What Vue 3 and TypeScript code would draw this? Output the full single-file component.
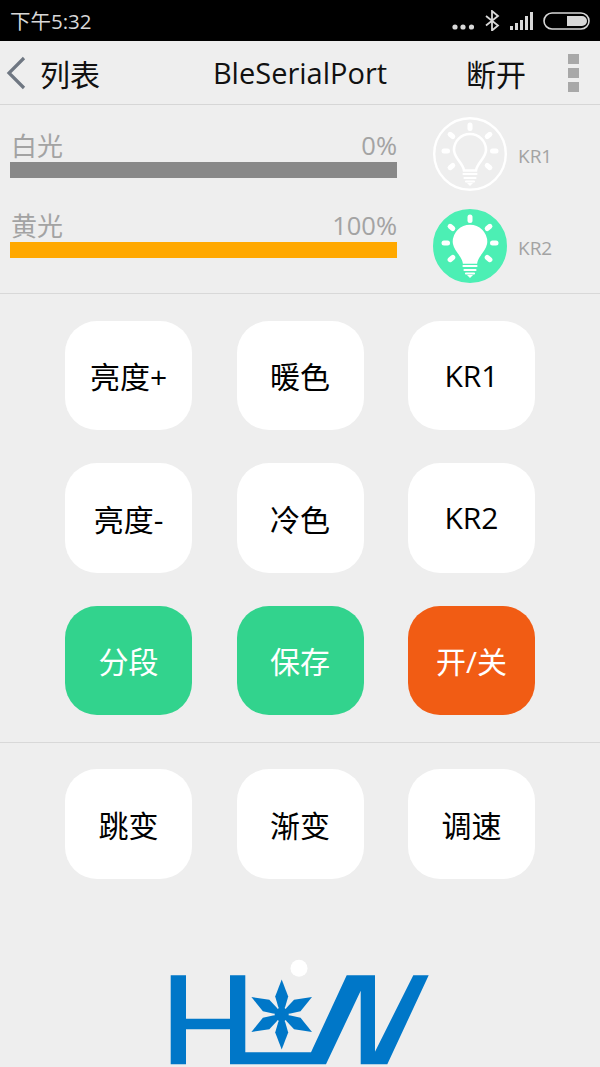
<template>
  <div class="screen">
    <div class="status-bar">
      <span class="time">下午5:32</span>
      <div class="status-icons">
        <svg class="dots" width="22" height="6" viewBox="0 0 22 6"><circle cx="3" cy="3" r="2.6" /><circle cx="11" cy="3" r="2.6" /><circle cx="19.5" cy="3" r="2.6" /></svg>
        <svg class="bt" width="16" height="21" viewBox="0 0 16 21"><path d="M2 6l12 9.5-6 5V1l6 5L2 15.5" /></svg>
        <svg class="signal" width="24" height="18" viewBox="0 0 24 18"><rect v-for="b in signalBars" :key="b.x" :x="b.x" :y="18 - b.h" width="3" :height="b.h" /></svg>
        <svg class="battery" width="47" height="18" viewBox="0 0 47 18"><rect class="shell" x="1" y="1" width="45" height="16" rx="8" /><path d="M24 4h15a5 5 0 0 1 0 10H24z" /></svg>
      </div>
    </div>

    <div class="nav-bar">
      <div class="nav-left">
        <svg class="back" width="20" height="34" viewBox="0 0 20 34"><path d="M18 2L3 17l15 15" /></svg>
        <span>列表</span>
      </div>
      <span class="title">BleSerialPort</span>
      <div class="nav-right">
        <span class="disconnect">断开</span>
        <div class="kebab"><i /><i /><i /></div>
      </div>
    </div>

    <div class="lights">
      <div class="bars">
        <div v-for="c in channels" :key="c.label" class="channel">
          <div class="channel-head">
            <span class="name">{{ c.label }}</span>
            <span class="pct">{{ c.value }}%</span>
          </div>
          <div class="bar" :class="c.tone" />
        </div>
      </div>
      <div class="lamps">
        <div v-for="l in lamps" :key="l.name" class="lamp">
          <svg width="74" height="74" viewBox="-37 -37 74 74" :class="{ on: l.on }">
            <circle class="disc" r="35.8" />
            <g class="rays" transform="translate(0 -3)">
              <path v-for="a in rayAngles" :key="a" d="M0 -22.5V-26" :transform="`rotate(${a})`" />
            </g>
            <path class="bulb" d="M-6 16.5C-7 9-16 4-16-4A16 16 0 1 1 16-4C16 4 7 9 6 16.5Z" />
            <path class="base" d="M-6.5 20H6.5M-5.5 24H5.5M-4 27.5H4" />
            <path class="tip" d="M-3 29H3L0 32Z" />
          </svg>
          <span class="lamp-name">{{ l.name }}</span>
        </div>
      </div>
    </div>

    <div class="keys first">
      <button v-for="k in mainKeys" :key="k.text" class="key" :class="k.tone">{{ k.text }}</button>
    </div>

    <div class="keys second">
      <button v-for="k in modeKeys" :key="k" class="key">{{ k }}</button>
    </div>

    <svg class="logo" width="260" height="108" viewBox="170 959 260 108">
      <circle class="logo-dot" cx="299" cy="968.3" r="8.5" />
      <path d="M170.7 975.3H186V1018.7H230V975.3H245.3V1052.3H311L346.7 975.3H375V1051.7L413.3 975.3H428.7L387.3 1064.3H360.7V990.7L326 1064.3H230V1029.3H186V1064.3H170.7Z" />
      <g transform="translate(281.7 1014.5)">
        <circle r="7" />
        <path v-for="a in petalAngles" :key="a" d="M0-35L6.5-18L3.6-8L0 0L-3.6-8L-6.5-18Z" :transform="`rotate(${a})`" />
      </g>
    </svg>
  </div>
</template>

<script setup lang="ts">
const signalBars = [
  { x: 0, h: 4 },
  { x: 5, h: 7 },
  { x: 10, h: 10 },
  { x: 15, h: 14 },
  { x: 20, h: 18 },
]

const channels = [
  { label: '白光', value: 0, tone: 'grey' },
  { label: '黄光', value: 100, tone: 'amber' },
]

const lamps = [
  { name: 'KR1', on: false },
  { name: 'KR2', on: true },
]

const rayAngles = [0, 50, 90, 130, 230, 270, 310]
const petalAngles = [0, 60, 120, 180, 240, 300]

const mainKeys = [
  { text: '亮度+', tone: '' },
  { text: '暖色', tone: '' },
  { text: 'KR1', tone: '' },
  { text: '亮度-', tone: '' },
  { text: '冷色', tone: '' },
  { text: 'KR2', tone: '' },
  { text: '分段', tone: 'green' },
  { text: '保存', tone: 'green' },
  { text: '开/关', tone: 'orange' },
]

const modeKeys = ['跳变', '渐变', '调速']
</script>

<style>
html,
body {
  margin: 0;
  background: #eeeeee;
}
</style>

<style scoped>
.screen {
  width: 600px;
  height: 1067px;
  overflow: hidden;
  display: flex;
  flex-direction: column;
  background: #eeeeee;
  font-family: "Open Sans", "Noto Sans CJK SC", sans-serif;
}

.status-bar {
  height: 41px;
  flex: none;
  display: flex;
  align-items: center;
  justify-content: space-between;
  padding: 0 10px;
  background: #000;
  color: #d8d8d8;
}
.time {
  font-size: 20.5px;
  margin-top: -1px;
}
.status-icons {
  display: flex;
  align-items: center;
  gap: 10px;
}
.status-icons svg {
  display: block;
  fill: #d8d8d8;
}
.dots {
  margin-top: 13px;
}
.status-icons .bt {
  fill: none;
  stroke: #d8d8d8;
  stroke-width: 1.8;
}
.status-icons .battery {
  margin-left: -1px;
}
.status-icons .battery .shell {
  fill: none;
  stroke: #d8d8d8;
  stroke-width: 1.6;
}

.nav-bar {
  height: 63px;
  flex: none;
  display: grid;
  grid-template-columns: 1fr auto 1fr;
  align-items: center;
  border-bottom: 1px solid #d6d6d6;
  color: #111;
  font-size: 30px;
}
.nav-left {
  display: flex;
  align-items: center;
  padding-left: 6px;
  gap: 14px;
}
.back {
  fill: none;
  stroke: #6f7782;
  stroke-width: 3.2;
}
.title {
  font-size: 29px;
}
.nav-right {
  display: flex;
  align-items: center;
  justify-content: flex-end;
  gap: 42px;
  padding-right: 21px;
}
.kebab {
  display: flex;
  flex-direction: column;
  gap: 4px;
}
.kebab i {
  display: block;
  width: 11px;
  height: 10px;
  background: #a8a8a8;
}

.lights {
  height: 188px;
  flex: none;
  display: flex;
  border-bottom: 1px solid #d8d8d8;
}
.bars {
  width: 387px;
  margin-left: 10px;
  padding-top: 24px;
  display: flex;
  flex-direction: column;
  gap: 31px;
}
.channel-head {
  height: 33px;
  display: flex;
  align-items: center;
  justify-content: space-between;
  padding-left: 1px;
  font-size: 26px;
  color: #a3a3a3;
}
.name {
  margin-top: -1px;
}
.pct {
  font-size: 25.5px;
  margin-top: -2px;
}
.bar {
  height: 16px;
}
.bar.grey {
  background: #888888;
}
.bar.amber {
  background: #ffa800;
}
.lamps {
  margin-left: 36px;
  padding-top: 12px;
  display: flex;
  flex-direction: column;
  gap: 18px;
}
.lamp {
  display: flex;
  align-items: center;
  gap: 11px;
}
.lamp svg {
  display: block;
}
.disc {
  fill: none;
  stroke: #fff;
  stroke-width: 2.4;
}
.rays path,
.base {
  fill: none;
  stroke: #fff;
  stroke-linecap: round;
}
.rays path {
  stroke-width: 5;
}
.base {
  stroke-width: 2.2;
}
.bulb {
  fill: none;
  stroke: #fff;
  stroke-width: 2.6;
}
.tip {
  fill: #fff;
}
.on .disc {
  fill: #4cefb4;
  stroke: #4cefb4;
}
.on .bulb {
  fill: #fff;
}
.lamp-name {
  font-size: 19px;
  color: #a3a3a3;
  padding-top: 4px;
}

.keys {
  flex: none;
  display: grid;
  grid-template-columns: repeat(3, 127px);
  column-gap: 44.5px;
  row-gap: 33px;
  grid-auto-rows: 109.5px;
  padding-left: 65px;
}
.keys.first {
  padding-top: 26.7px;
  padding-bottom: 26.5px;
  border-bottom: 1px solid #d8d8d8;
}
.keys.second {
  padding-top: 26px;
  grid-auto-rows: 110px;
}
.key {
  padding: 0;
  border: none;
  border-radius: 32px;
  background: #fff;
  color: #000;
  font-family: inherit;
  font-size: 30px;
}
.key.green {
  background: #32d38d;
  color: #fff;
}
.key.orange {
  background: #f15c14;
  color: #fff;
}

.logo {
  position: absolute;
  left: 170px;
  top: 959px;
  fill: #0077c8;
}
.logo-dot {
  fill: #fff;
}
</style>
